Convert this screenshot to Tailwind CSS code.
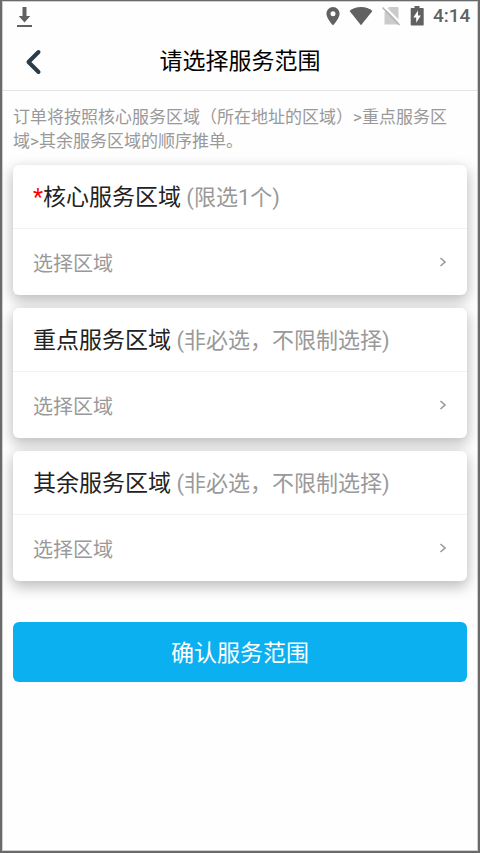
<!DOCTYPE html>
<html lang="zh-CN">
<head>
<meta charset="utf-8">
<meta name="viewport" content="width=device-width, initial-scale=1">
<title>请选择服务范围</title>
<script src="https://cdn.jsdelivr.net/npm/@tailwindcss/browser@4"></script>
</head>
<body class="min-h-screen flex flex-col bg-[#fefefe] border-t border-x-2 border-b-2 border-[#6a6a6a] font-[Roboto,'Noto_Sans_CJK_SC',sans-serif]">
<div class="flex-1 flex flex-col border border-[#d0d0d0]">
  <div class="h-7 shrink-0 flex items-center justify-between pl-3 pr-2 text-[#616161]">
    <svg class="w-5 h-6" viewBox="0 0 20 24" fill="currentColor" aria-hidden="true"><path d="M7.500 3h4v9h3.800L9.500 18.500 3.700 12h3.800zM2 21h15v2H2z"/></svg>
    <div class="flex items-center">
      <svg class="w-4 h-5 mr-2" viewBox="0 0 16 20" fill="currentColor" aria-hidden="true"><path fill-rule="evenodd" d="M8 1a6.600 6.600 0 0 0-6.600 6.600C1.400 12.500 8 19.500 8 19.500s6.600-7 6.600-11.900A6.600 6.600 0 0 0 8 1zm0 4.200a2.500 2.500 0 1 1 0 5 2.500 2.500 0 0 1 0-5z"/></svg>
      <svg class="w-6 h-5 mr-2" viewBox="0 0 24 20" fill="currentColor" aria-hidden="true"><path d="M12 19.200.600 5C3.500 2.500 7.500 1.100 12 1.100S20.500 2.500 23.400 5z"/></svg>
      <svg class="w-5 h-5 mr-2" viewBox="0 0 20 20" aria-hidden="true"><path fill="#cbcbcb" d="M8 1h8.500q1 0 1 1v16.500h-14V6z"/><path stroke="#fefefe" stroke-width="2" d="M3 0l17 17.500"/><path stroke="#b5b5b5" stroke-width="1.500" d="M1.500 1.500l17 17.500"/></svg>
      <svg class="w-4 h-5 mr-2" viewBox="0 0 16 20" aria-hidden="true"><path fill="currentColor" d="M5.500 0h5v2H14q.700 0 .700.700v16q0 .800-.800.800H2.500q-.800 0-.800-.800v-16Q1.700 2 2.400 2h3.100z"/><path fill="#fefefe" d="M9 4.500 4.300 11.500h2.900v5.200L11.900 9.500H9z"/></svg>
      <span class="w-9 text-[19px] leading-6 font-medium">4:14</span>
    </div>
  </div>
  <header class="h-[61px] shrink-0 grid grid-cols-[40px_1fr_40px] items-center border-b border-[#e4e4e4] px-3 pt-1">
    <button type="button" aria-label="返回" class="h-10 flex items-center pl-2 text-[#2b3b48]">
      <svg class="w-6 h-7" viewBox="0 0 24 28" fill="none" stroke="currentColor" stroke-width="4" stroke-linecap="round" stroke-linejoin="round" aria-hidden="true"><path d="M15.500 4 5.500 14l10 10"/></svg>
    </button>
    <h1 class="text-center text-[23px] leading-8 text-black">请选择服务范围</h1>
  </header>
  <main class="flex flex-col px-[10px] pt-[14px]">
    <p class="pr-3 text-[17px] leading-6 text-[#999]">订单将按照核心服务区域（所在地址的区域）&gt;重点服务区域&gt;其余服务区域的顺序推单。</p>
    <div class="mt-3 flex flex-col gap-[13px]">
      <section class="rounded-md bg-white shadow-[0_5px_14px_1px_rgba(0,0,0,0.26)]">
        <h2 class="h-16 flex items-center border-b border-[#f3f3f3] px-5 pt-[2px] text-[23px] leading-8 text-[#222] whitespace-pre"><span class="text-[#f00]">*</span>核心服务区域<span class="text-[22px] text-[#999]"> (限选1个)</span></h2>
        <button type="button" aria-label="核心服务区域 选择区域" class="w-full h-[66px] flex items-center justify-between px-5 text-xl text-[#999]"><span class="pt-1">选择区域</span><svg class="w-2 h-3" viewBox="0 0 8 12" fill="none" stroke="currentColor" stroke-width="1.600" aria-hidden="true"><path d="M1.500 2 6 6l-4.500 4"/></svg></button>
      </section>
      <section class="rounded-md bg-white shadow-[0_5px_14px_1px_rgba(0,0,0,0.26)]">
        <h2 class="h-16 flex items-center border-b border-[#f3f3f3] px-5 pt-[2px] text-[23px] leading-8 text-[#222] whitespace-pre">重点服务区域<span class="text-[22px] text-[#999]"> (非必选，不限制选择)</span></h2>
        <button type="button" aria-label="重点服务区域 选择区域" class="w-full h-[66px] flex items-center justify-between px-5 text-xl text-[#999]"><span class="pt-1">选择区域</span><svg class="w-2 h-3" viewBox="0 0 8 12" fill="none" stroke="currentColor" stroke-width="1.600" aria-hidden="true"><path d="M1.500 2 6 6l-4.500 4"/></svg></button>
      </section>
      <section class="rounded-md bg-white shadow-[0_5px_14px_1px_rgba(0,0,0,0.26)]">
        <h2 class="h-16 flex items-center border-b border-[#f3f3f3] px-5 pt-[2px] text-[23px] leading-8 text-[#222] whitespace-pre">其余服务区域<span class="text-[22px] text-[#999]"> (非必选，不限制选择)</span></h2>
        <button type="button" aria-label="其余服务区域 选择区域" class="w-full h-[66px] flex items-center justify-between px-5 text-xl text-[#999]"><span class="pt-1">选择区域</span><svg class="w-2 h-3" viewBox="0 0 8 12" fill="none" stroke="currentColor" stroke-width="1.600" aria-hidden="true"><path d="M1.500 2 6 6l-4.500 4"/></svg></button>
      </section>
    </div>
    <button type="button" class="mt-[41px] h-[60px] pt-1 rounded-md bg-[#0bb0f0] text-[23px] leading-8 text-white">确认服务范围</button>
  </main>
</div>
</body>
</html>
